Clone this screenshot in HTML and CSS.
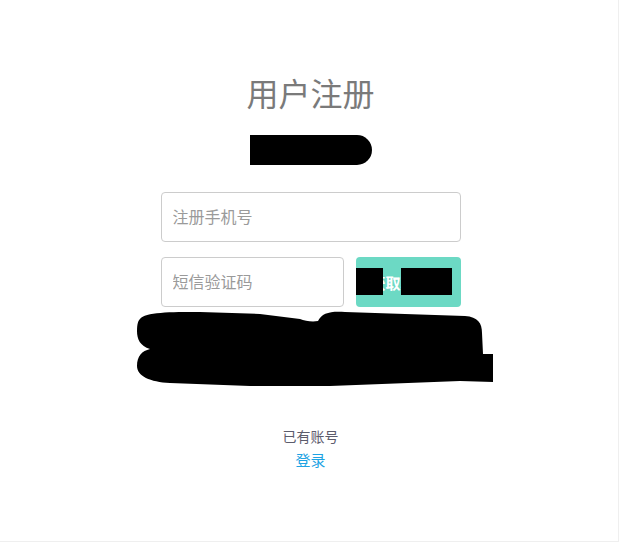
FILE: index.html
```html
<!DOCTYPE html>
<html lang="zh-CN">
<head>
<meta charset="utf-8">
<title>用户注册</title>
<link rel="stylesheet" href="styles.css">
</head>
<body>
<div class="page">
  <h1 class="title">用户注册</h1>
  <div class="subtitle-cover"></div>
  <form class="form">
    <input class="field" type="text" placeholder="注册手机号">
    <div class="code-row">
      <input class="field code-field" type="text" placeholder="短信验证码">
      <button class="code-btn" type="button">获取验证码
        <span class="cover cover-a"></span>
        <span class="cover cover-b"></span>
      </button>
    </div>
    <div class="submit-wrap">
      <button class="submit" type="button">注册</button>
      <svg class="blob" width="357" height="77" viewBox="0 0 357 77" aria-hidden="true">
        <path d="M3 9 C8 2 33 2 63 2 L123 4 L163 9 C168 11 175 12 181 11 C185 3 193 1 208 2 L328 6 C341 7 345 13 345 23 L346 44 L356 44 L356 72 L323 71 L193 76 L113 76 L33 73 C13 72 0 66 0 56 C0 46 5 41 13 39 C3 36 0 29 0 21 C0 14 1 11 3 9 Z" fill="#000"/>
      </svg>
    </div>
  </form>
  <p class="has-account">已有账号</p>
  <a class="login" href="#">登录</a>
</div>
</body>
</html>
```
FILE: styles.css
```css
html, body {
  margin: 0;
  padding: 0;
  background: #ffffff;
}
body {
  font-family: "Noto Sans CJK SC", "Noto Sans", sans-serif;
}
.page {
  box-sizing: border-box;
  width: 619px;
  height: 542px;
  padding: 72px 0 0 3px;
  border-right: 1px solid #efefef;
  border-bottom: 1px solid #efefef;
  display: flex;
  flex-direction: column;
  align-items: center;
  overflow: hidden;
}
.title {
  margin: 0;
  font-size: 32px;
  line-height: 40px;
  font-weight: 400;
  color: #7a7a7a;
}
.subtitle-cover {
  margin-top: 23px;
  width: 122px;
  height: 30px;
  background: #000;
  border-radius: 0 15px 15px 0;
}
.form {
  margin: 27px 0 0;
  width: 300px;
  display: flex;
  flex-direction: column;
  gap: 15px;
}
.field {
  box-sizing: border-box;
  height: 50px;
  width: 100%;
  padding: 0 11px 3px;
  border: 1px solid #cccccc;
  border-radius: 4px;
  font-family: inherit;
  font-size: 16px;
  color: #333;
  background: #fff;
  outline: none;
}
.field::placeholder {
  color: #9a9a9a;
}
.code-row {
  display: flex;
  gap: 12px;
}
.code-field {
  width: 183px;
  flex: none;
}
.code-btn {
  position: relative;
  flex: 1;
  height: 50px;
  border: none;
  border-radius: 4px;
  background: #6cd9c4;
  color: #ffffff;
  font-family: inherit;
  font-size: 15px;
  font-weight: 700;
  padding: 0;
}
.cover {
  position: absolute;
  top: 11px;
  height: 27px;
  background: #000;
}
.cover-a {
  left: 0;
  width: 27px;
}
.cover-b {
  left: 45px;
  width: 51px;
}
.submit-wrap {
  position: relative;
  height: 50px;
}
.submit {
  width: 100%;
  height: 50px;
  border: none;
  border-radius: 4px;
  background: #6cd9c4;
  color: #fff;
  font-family: inherit;
  font-size: 16px;
}
.blob {
  position: absolute;
  left: -24px;
  top: -12px;
}
.has-account {
  margin: 54px 0 0;
  font-size: 14px;
  line-height: 20px;
  color: #5c5c6c;
}
.login {
  margin-top: 3px;
  font-size: 15px;
  line-height: 22px;
  color: #1ea3e3;
  text-decoration: none;
}
```
